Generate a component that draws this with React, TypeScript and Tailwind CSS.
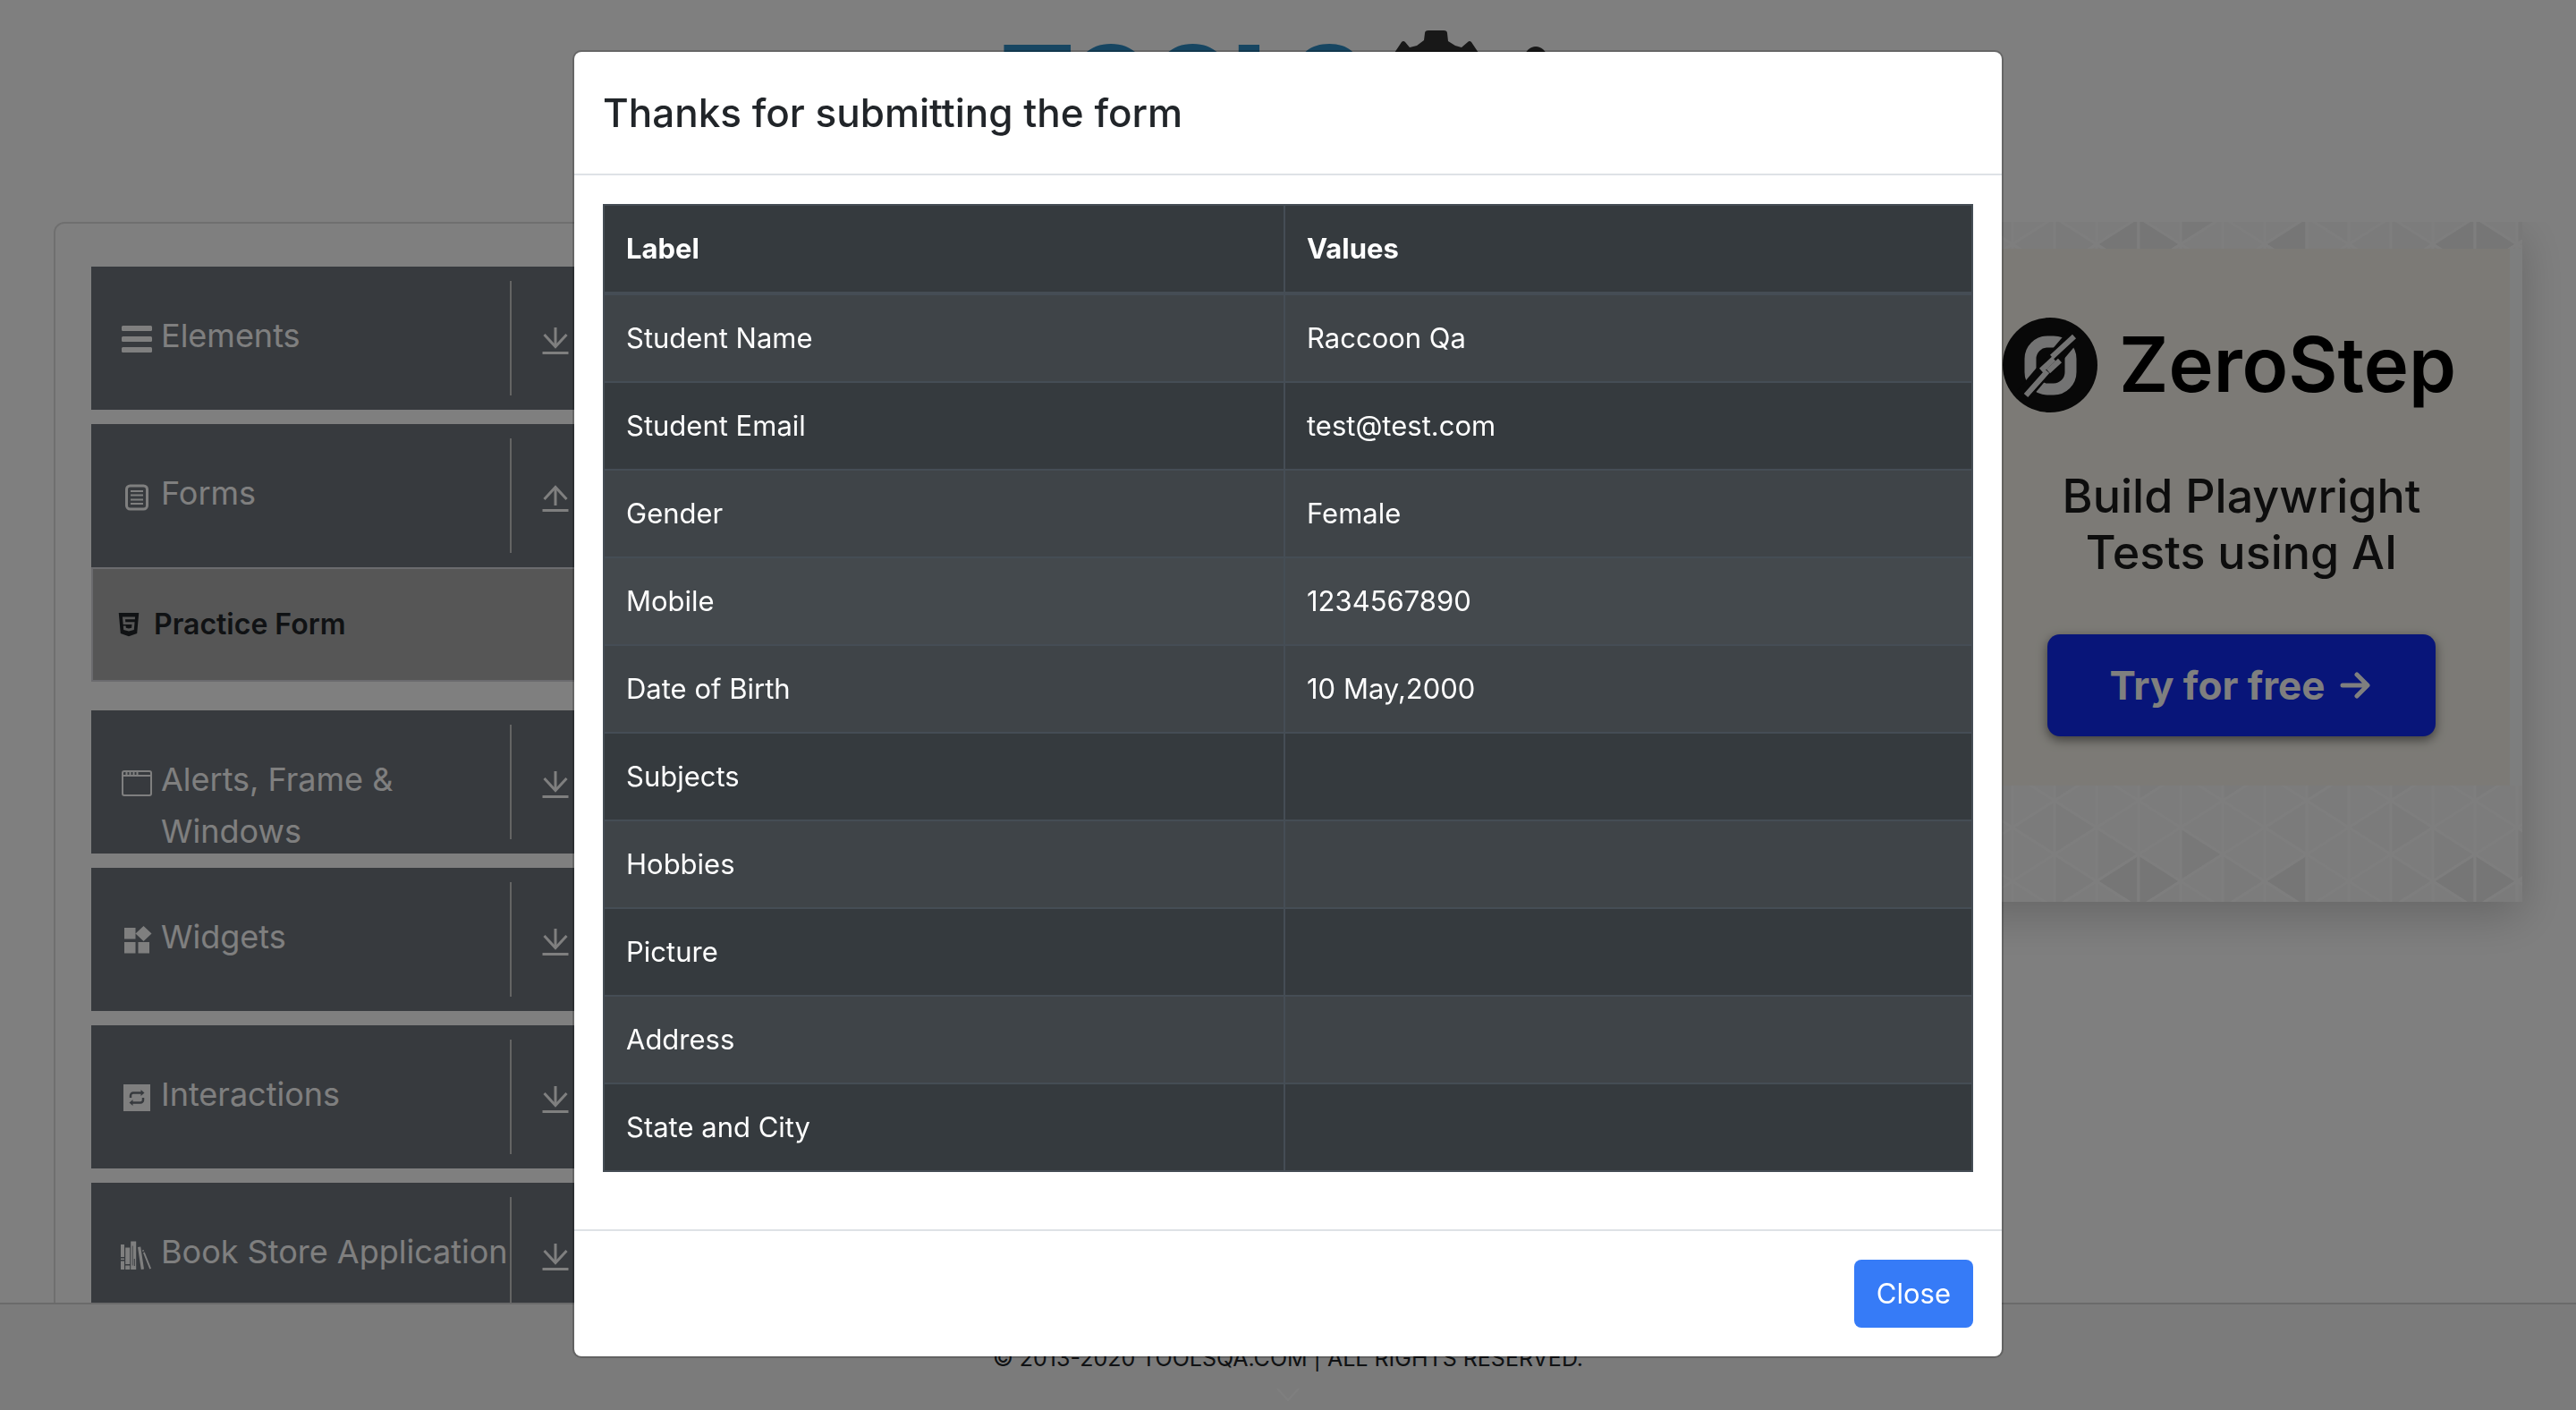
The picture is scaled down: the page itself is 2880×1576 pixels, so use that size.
import type { ReactNode } from "react";
import { FaHtml5 } from "react-icons/fa";

const rows: [string, string][] = [
  ["Student Name", "Raccoon Qa"],
  ["Student Email", "test@test.com"],
  ["Gender", "Female"],
  ["Mobile", "1234567890"],
  ["Date of Birth", "10 May,2000"],
  ["Subjects", ""],
  ["Hobbies", ""],
  ["Picture", ""],
  ["Address", ""],
  ["State and City", ""],
];

const HOVERED_ROW = 3;

function rowColor(i: number) {
  if (i === HOVERED_ROW) return "bg-[#44494d]";
  return i % 2 === 0 ? "bg-[#3f4448]" : "bg-[#353a3e]";
}

function MenuIcon({ children }: { children: ReactNode }) {
  return (
    <svg viewBox="0 0 36 36" className="mt-[15px] size-9 shrink-0" fill="currentColor" aria-hidden="true">
      {children}
    </svg>
  );
}

const elementsIcon = (
  <MenuIcon>
    <rect x="2" y="3" width="34" height="6" rx="1.5" />
    <rect x="2" y="15" width="34" height="6" rx="1.5" />
    <rect x="2" y="27" width="34" height="6" rx="1.5" />
  </MenuIcon>
);

const formsIcon = (
  <MenuIcon>
    <rect x="7.5" y="6" width="23" height="26" rx="4" fill="none" stroke="currentColor" strokeWidth="3" />
    <path d="M12 12h14M12 16.5h14M12 21.500h14M12 26h14" fill="none" stroke="currentColor" strokeWidth="1.8" />
  </MenuIcon>
);

const windowIcon = (
  <MenuIcon>
    <rect x="3" y="5" width="32" height="27" rx="2" fill="none" stroke="currentColor" strokeWidth="2" />
    <path d="M3 10h32M7.500 5v5M11.500 5v5M15.500 5v5M19.500 5v5" fill="none" stroke="currentColor" strokeWidth="2" />
  </MenuIcon>
);

const widgetsIcon = (
  <MenuIcon>
    <path d="M5 4h12.500v12.500H5zM5 20h12.500v12.500H5zM20.500 20H33v12.500H20.500zM26.500 2l9 8.500-9 8.500-9-8.500z" />
  </MenuIcon>
);

const interactionsIcon = (
  <MenuIcon>
    <path d="M4 3h30v30H4z" />
    <g fill="none" stroke="#6f757d" strokeWidth="2.500">
      <path d="M12 18v-2.500a3 3 0 0 1 3-3h9M26 18v2.500a3 3 0 0 1-3 3h-9" />
    </g>
    <path d="M23.500 9l4 3.500-4 3.500zM14.500 20l-4 3.500 4 3.500z" fill="#6f757d" />
  </MenuIcon>
);

const booksIcon = (
  <MenuIcon>
    <path d="M1 6h4v14H1zM1 21.500h4v1.500H1zM1 24.500h4V34H1zM6.200 9.500h5V28h-5zM6.200 29.500h5V34h-5z" />
    <path fillRule="evenodd" d="M12.200 2.500h6V34h-6zM13.800 7.500v22h.8v-22zM15.800 22v8h1v-8z" />
    <path d="M20 9l3.200-.5 3.800 25-3.200.5zM25 12.500l1.600-.6.5 1.400-1.600.6zM26 15.200l1.700-.6 7.300 18.200-1.700.7z" />
  </MenuIcon>
);

function ToggleIcon({ open }: { open?: boolean }) {
  return (
    <svg viewBox="0 0 32 32" className="size-8" fill="none" stroke="currentColor" aria-hidden="true">
      <path d={open ? "M16 5v20" : "M16 2v20"} strokeWidth="3" />
      <path d={open ? "M3.500 18L16 4.500 28.500 18" : "M3.500 10L16 23.500 28.500 10"} strokeWidth="3" />
      <path d="M1.500 30.500h29" strokeWidth="3" />
    </svg>
  );
}

function MenuGroup({ icon, label, open }: { icon: ReactNode; label: string; open?: boolean }) {
  return (
    <button type="button" aria-expanded={!!open} className="flex h-40 w-full items-start bg-[#6f757d] py-4 pl-8 text-left text-white">
      <span className="flex h-32 w-[438px] gap-[10px] border-r-2 border-[#c8c8c8] pt-8">
        {icon}
        <span className="text-4xl leading-[58px] whitespace-pre">{label}</span>
      </span>
      <span className="pt-[50px] pl-[33px]">
        <ToggleIcon open={open} />
      </span>
    </button>
  );
}

const COL = 47;
const ROW = 60;

/* Triangle mosaic behind the advert. `top` is the y of the first vertex on even columns. */
function Mosaic({ height, top, dark }: { height: number; top: number; dark: number }) {
  const cells: ReactNode[] = [];
  for (let k = -2; k < 13; k++) {
    const x = 58 + COL * k;
    const even = ((k % 2) + 2) % 2 === 0;
    for (let n = -2; n < 4; n++) {
      const left = top + (even ? 0 : -ROW / 2) + ROW * n;
      const seed = (((k * 7 + n * 5 + k * n * 3) % 8) + 8) % 8;
      const col = ((k % 8) + 8) % 8;
      const onRow = Math.abs(left - dark) < 1;
      const opensRight = onRow && (col === 2 || col === 6);
      cells.push(
        <path
          key={`a${k}-${n}`}
          d={`M${x} ${left}l${COL} -30v60z`}
          fill={opensRight ? "#ececec" : seed < 3 ? "#f6f6f6" : "#f8f8f8"}
        />,
      );
      const right = left + ROW / 2;
      const opensLeft = Math.abs(right - dark) < 1 && col === 3;
      const mid = Math.abs(right - (dark - 30)) < 1 && col === 4;
      cells.push(
        <path
          key={`b${k}-${n}`}
          d={`M${x} ${left}v60l${COL} -30z`}
          fill={opensLeft ? "#ececec" : mid ? "#f1f1f1" : seed > 5 ? "#f5f5f5" : "#f8f8f8"}
        />,
      );
    }
  }
  return (
    <svg viewBox={`0 0 628 ${height}`} className="block w-full" stroke="#fcfcfc" strokeWidth="3" aria-hidden="true">
      {cells}
    </svg>
  );
}

function Advert() {
  return (
    <aside className="w-[628px] shrink-0 self-start bg-[#fafcfc] shadow-[0_16px_48px_rgba(0,0,0,0.2)]">
      <Mosaic height={30} top={25} dark={25} />
      <div className="mx-[14px] flex h-[600px] flex-col items-center bg-[#f8f5ec] pt-[77px] text-black">
        <div className="flex items-center gap-6 self-start pl-[33px]">
          <svg viewBox="0 0 106 106" className="size-[106px]" aria-hidden="true">
            <circle cx="53" cy="53" r="53" fill="#101010" />
            <rect x="31" y="27" width="45" height="53" rx="19" fill="none" stroke="#e6e6e6" strokeWidth="13" />
            <path d="M22 88L83 16" stroke="#101010" strokeWidth="17" />
            <path d="M26 87L50 60M55 44L80 21M43 59L57 46M51 60L64 48" stroke="#e6e6e6" strokeWidth="6" />
          </svg>
          <span className="text-[85px] leading-[106px] font-semibold">ZeroStep</span>
        </div>
        <p className="mt-[62px] text-center text-[52px] leading-[63px] font-medium text-[#1a1a1a]">
          Build Playwright
          <br />
          Tests using AI
        </p>
        <a
          href="#zerostep"
          className="mt-[60px] flex h-[114px] w-[434px] items-center justify-center gap-4 rounded-[14px] bg-[#102af2] pr-1 text-[44px] font-bold text-white shadow-[0_4px_12px_rgba(0,0,0,0.5)]"
        >
          Try for free
          <svg viewBox="0 0 34 34" className="size-[34px]" fill="none" stroke="currentColor" strokeWidth="5" strokeLinecap="round" strokeLinejoin="round" aria-hidden="true">
            <path d="M3 17h27M19 5l12 12-12 12" />
          </svg>
        </a>
      </div>
      <Mosaic height={130} top={47} dark={107} />
    </aside>
  );
}

function Logo() {
  return (
    <header className="flex h-[248px] shrink-0 items-start justify-center pt-[34px]">
      <span className="pl-2 text-[118px] leading-[118px] font-black text-[#2f8cc4]">TOOLS</span>
      <svg viewBox="0 0 220 120" className="ml-6 w-[220px]" fill="#303030" aria-hidden="true">
        <path d="M4 34L18 13q2-2 4 0l5 6 8-2 8-6 1-8q0-3 4-3h17q4 0 4 3l1 9 8 5 7 2 7-6q2-2 4 0l14 21v40L56 108 4 74z" />
        <circle cx="168" cy="30" r="12" />
      </svg>
    </header>
  );
}

export default function App() {
  return (
    <div className="relative flex h-screen flex-col overflow-hidden bg-white font-['Inter',sans-serif] text-[31px] leading-[48px] text-[#212529]">
      <Logo />
      <main className="flex min-h-0 flex-1 justify-between gap-8 overflow-hidden px-[60px]">
        <nav className="w-[760px] shrink-0 self-start rounded-xl border-2 border-[#dedede] px-10 py-12">
          <div className="flex flex-col gap-4">
            <MenuGroup icon={elementsIcon} label="Elements" />
            <div>
              <MenuGroup icon={formsIcon} label="Forms" open />
              <a
                href="#practice-form"
                className="mb-4 flex h-32 items-center gap-4 border-2 border-[#d6d6dc] bg-[#acacac] pl-7 text-[32px] font-semibold text-[#212529]"
              >
                <FaHtml5 className="h-[30px] w-6" />
                Practice Form
              </a>
            </div>
            <MenuGroup icon={windowIcon} label={"Alerts, Frame &\nWindows"} />
            <MenuGroup icon={widgetsIcon} label="Widgets" />
            <MenuGroup icon={interactionsIcon} label="Interactions" />
            <MenuGroup icon={booksIcon} label="Book Store Application" />
          </div>
        </nav>
        <Advert />
      </main>
      <footer className="z-10 flex h-[120px] shrink-0 flex-col items-center border-t-2 border-[#d5d5d5] bg-[#f6f6f6] pt-[42px]">
        <span className="text-[25px] leading-9">© 2013-2020 TOOLSQA.COM | ALL RIGHTS RESERVED.</span>
        <svg viewBox="0 0 26 14" className="mt-4 w-[26px]" fill="none" stroke="#ffffff" strokeWidth="2" aria-hidden="true">
          <path d="M1 0l12 13L25 0" />
        </svg>
      </footer>

      <div className="fixed inset-0 z-20 flex items-start justify-center bg-black/50 px-8 pt-14">
        <div
          role="dialog"
          aria-modal="true"
          aria-labelledby="dialog-title"
          className="w-full max-w-[1600px] rounded-[10px] border-2 border-black/20 bg-white bg-clip-padding"
        >
          <div className="border-b-2 border-[#dee2e6] p-8">
            <h2 id="dialog-title" className="text-[44px] leading-[72px] font-medium">
              Thanks for submitting the form
            </h2>
          </div>
          <div className="p-8">
            <table className="mb-8 w-full border-collapse border-2 border-[#454d55] text-left text-white">
              <thead>
                <tr className="bg-[#353a3e]">
                  <th scope="col" className="w-[761px] border-2 border-b-4 border-[#454d55] p-6 font-bold">Label</th>
                  <th scope="col" className="border-2 border-b-4 border-[#454d55] p-6 font-bold">Values</th>
                </tr>
              </thead>
              <tbody>
                {rows.map(([label, value], i) => (
                  <tr key={label} className={rowColor(i)}>
                    <td className="border-2 border-[#454d55] p-6">{label}</td>
                    <td className="border-2 border-[#454d55] p-6">{value}</td>
                  </tr>
                ))}
              </tbody>
            </table>
          </div>
          <div className="flex justify-end border-t-2 border-[#dee2e6] p-8">
            <button type="button" className="h-[76px] rounded-lg bg-[#367bf7] px-[25px] text-white">
              Close
            </button>
          </div>
        </div>
      </div>
    </div>
  );
}
